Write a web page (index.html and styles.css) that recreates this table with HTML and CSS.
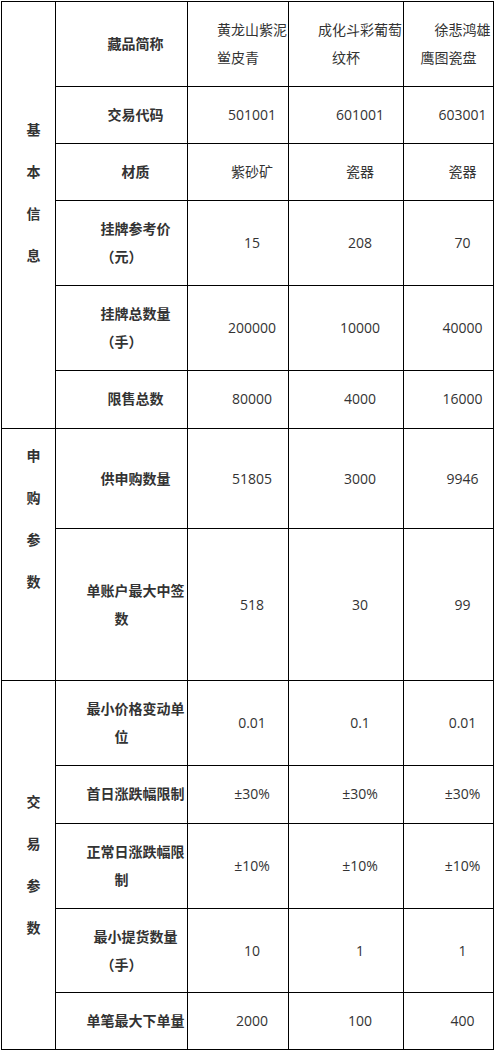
FILE: index.html
```html
<!DOCTYPE html>
<html lang="zh-CN">
<head>
<meta charset="utf-8">
<title>藏品参数</title>
<link rel="stylesheet" href="styles.css">
</head>
<body>
<table class="tbl">
  <colgroup>
    <col class="c1"><col class="c2"><col class="c3"><col class="c4"><col class="c5">
  </colgroup>
  <tbody>
    <tr>
      <td class="group g-basic" rowspan="6">基<br>本<br>信<br>息</td>
      <td class="label">藏品简称</td>
      <td>黄龙山紫泥鲎皮青</td>
      <td>成化斗彩葡萄纹杯</td>
      <td>徐悲鸿雄鹰图瓷盘</td>
    </tr>
    <tr>
      <td class="label">交易代码</td>
      <td>501001</td>
      <td>601001</td>
      <td>603001</td>
    </tr>
    <tr>
      <td class="label">材质</td>
      <td>紫砂矿</td>
      <td>瓷器</td>
      <td>瓷器</td>
    </tr>
    <tr>
      <td class="label">挂牌参考价（元）</td>
      <td>15</td>
      <td>208</td>
      <td>70</td>
    </tr>
    <tr>
      <td class="label">挂牌总数量（手）</td>
      <td>200000</td>
      <td>10000</td>
      <td>40000</td>
    </tr>
    <tr class="r58">
      <td class="label">限售总数</td>
      <td>80000</td>
      <td>4000</td>
      <td>16000</td>
    </tr>
    <tr class="r100">
      <td class="group g-sub" rowspan="2">申<br>购<br>参<br>数</td>
      <td class="label">供申购数量</td>
      <td>51805</td>
      <td>3000</td>
      <td>9946</td>
    </tr>
    <tr class="r152">
      <td class="label">单账户最大中签数</td>
      <td>518</td>
      <td>30</td>
      <td>99</td>
    </tr>
    <tr>
      <td class="group g-trade" rowspan="5">交<br>易<br>参<br>数</td>
      <td class="label">最小价格变动单位</td>
      <td>0.01</td>
      <td>0.1</td>
      <td>0.01</td>
    </tr>
    <tr class="r58">
      <td class="label">首日涨跌幅限制</td>
      <td>±30%</td>
      <td>±30%</td>
      <td>±30%</td>
    </tr>
    <tr>
      <td class="label">正常日涨跌幅限制</td>
      <td>±10%</td>
      <td>±10%</td>
      <td>±10%</td>
    </tr>
    <tr class="r84">
      <td class="label">最小提货数量（手）</td>
      <td>10</td>
      <td>1</td>
      <td>1</td>
    </tr>
    <tr>
      <td class="label">单笔最大下单量</td>
      <td>2000</td>
      <td>100</td>
      <td>400</td>
    </tr>
  </tbody>
</table>
</body>
</html>
```

FILE: styles.css
```css
html, body {
  margin: 0;
  padding: 0;
  background: #ffffff;
}

body {
  font-family: "Open Sans", "Noto Sans CJK SC", sans-serif;
  font-size: 14px;
  color: #333333;
}

.tbl {
  margin: 1px 0 0 1px;
  width: 493px;
  table-layout: fixed;
  border-collapse: collapse;
}

.c1 { width: 54px; }
.c2 { width: 132px; }
.c3 { width: 101px; }
.c4 { width: 115px; }
.c5 { width: 90px; }

.tbl td {
  border: 1px solid #000000;
  padding: 14px 0;
  line-height: 28px;
  text-align: center;
  text-indent: 2em;
  vertical-align: middle;
  word-break: normal;
  text-spacing-trim: space-all;
}

.tbl td.label {
  font-weight: 700;
}

.tbl tr.r58 td { padding: 14px 0 15px; }
.tbl tr.r84 td { padding: 14px 0 13px; }
.tbl tr.r100 td { padding: 36px 0 35px; }
.tbl tr.r152 td { padding: 48px 0 47px; }

.tbl tr td.group {
  font-weight: 700;
  text-indent: 0;
  line-height: 42px;
  padding: 0 0 0 10px;
  vertical-align: top;
}

.tbl tr td.g-basic { padding-top: 107px; }
.tbl tr td.g-sub { padding-top: 6px; }
.tbl tr td.g-trade { vertical-align: middle; }
```
